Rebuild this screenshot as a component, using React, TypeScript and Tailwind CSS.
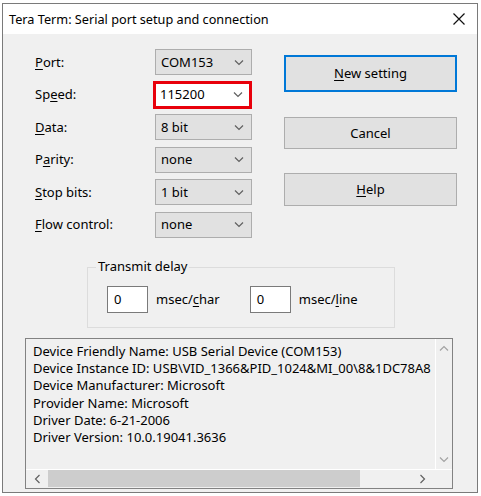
import React from "react";

const font = { fontFamily: '"Noto Sans", "Open Sans", sans-serif' };

function Chevron({ dir = "down", color = "#606060" }: { dir?: "down" | "up" | "left" | "right"; color?: string }) {
  const paths: Record<string, string> = {
    down: "M1 1.5 L5 5.5 L9 1.5",
    up: "M1 5.5 L5 1.5 L9 5.5",
    left: "M5.5 1 L1.5 5 L5.5 9",
    right: "M1.5 1 L5.5 5 L1.5 9",
  };
  const vertical = dir === "down" || dir === "up";
  return (
    <svg width={vertical ? 10 : 7} height={vertical ? 7 : 10} viewBox={vertical ? "0 0 10 7" : "0 0 7 10"} fill="none">
      <path d={paths[dir]} stroke={color} strokeWidth="1.2" />
    </svg>
  );
}

function U({ children }: { children: React.ReactNode }) {
  return <span className="underline underline-offset-2 decoration-1">{children}</span>;
}

function Combo({ value, highlight = false }: { value: string; highlight?: boolean }) {
  if (highlight) {
    return (
      <div className="w-[99px] h-[28px] -ml-[2px] border-[3px] border-[#e8000b] bg-white flex items-center justify-between pl-[4px] pr-[6px]">
        <span>{value}</span>
        <Chevron />
      </div>
    );
  }
  return (
    <div className="w-[97px] h-[26px] border border-[#adadad] bg-[#e1e1e1] flex items-center justify-between pl-[5px] pr-[7px]">
      <span>{value}</span>
      <Chevron />
    </div>
  );
}

function Row({ label, children }: { label: React.ReactNode; children: React.ReactNode }) {
  return (
    <div className="flex items-center h-[26px]">
      <div className="w-[120px]">{label}</div>
      {children}
    </div>
  );
}

function Button({ children, primary = false, h }: { children: React.ReactNode; primary?: boolean; h: string }) {
  return (
    <div
      className={`w-[173px] ${h} flex items-center justify-center bg-[#e1e1e1] ${
        primary ? "border-2 border-[#0078d7]" : "border border-[#adadad]"
      }`}
    >
      {children}
    </div>
  );
}

export default function App() {
  return (
    <div className="w-[481px] h-[496px] bg-white text-[13px] text-black leading-none" style={font}>
      <div className="ml-[2px] mt-[3px] w-[476px] h-[490px] border border-[#7a7a7a] bg-[#f0f0f0] flex flex-col">
        {/* Title bar */}
        <div className="h-[30px] bg-white flex items-center justify-between pl-[6px] pr-[12px] shrink-0">
          <span className="text-[12.7px]">Tera Term: Serial port setup and connection</span>
          <svg width="12" height="12" viewBox="0 0 12 12">
            <path d="M0.5 0.5 L11.5 11.5 M11.5 0.5 L0.5 11.5" stroke="#111" strokeWidth="1.2" />
          </svg>
        </div>

        {/* Top section */}
        <div className="flex pt-[15px] pl-[32px]">
          <div className="flex flex-col gap-[6.6px]">
            <Row label={<><U>P</U>ort:</>}>
              <Combo value="COM153" />
            </Row>
            <Row label={<>Sp<U>e</U>ed:</>}>
              <Combo value="115200" highlight />
            </Row>
            <Row label={<><U>D</U>ata:</>}>
              <Combo value="8 bit" />
            </Row>
            <Row label={<>P<U>a</U>rity:</>}>
              <Combo value="none" />
            </Row>
            <Row label={<><U>S</U>top bits:</>}>
              <Combo value="1 bit" />
            </Row>
            <Row label={<><U>F</U>low control:</>}>
              <Combo value="none" />
            </Row>
          </div>
          <div className="flex flex-col ml-[32px] pt-[6px]">
            <Button primary h="h-[37px]">
              <span><U>N</U>ew setting</span>
            </Button>
            <div className="mt-[25px]">
              <Button h="h-[32px]">Cancel</Button>
            </div>
            <div className="mt-[24px]">
              <Button h="h-[33px]">
                <span><U>H</U>elp</span>
              </Button>
            </div>
          </div>
        </div>

        {/* Transmit delay group */}
        <div className="ml-[84px] mt-[29px] w-[308px] h-[61px] border border-[#dcdcdc] relative">
          <span className="absolute -top-[8px] left-[8px] bg-[#f0f0f0] px-[2px]">Transmit delay</span>
          <div className="flex items-center pt-[18px] pl-[19px]">
            <div className="w-[41px] h-[27px] border border-[#7a7a7a] bg-white flex items-center pl-[6px]">0</div>
            <span className="ml-[8px]">msec/<U>c</U>har</span>
            <div className="ml-[30px] w-[41px] h-[27px] border border-[#7a7a7a] bg-white flex items-center pl-[6px]">0</div>
            <span className="ml-[8px]">msec/<U>l</U>ine</span>
          </div>
        </div>

        {/* Info box */}
        <div className="ml-[22px] mt-[10px] w-[428px] h-[151px] border border-[#828282] flex flex-col">
          <div className="flex flex-1 min-h-0">
            <div className="flex-1 bg-[#f0f0f0] pl-[7px] pt-[6px] flex flex-col gap-[4.2px] leading-[13px] overflow-hidden whitespace-nowrap">
              <div>Device Friendly Name: USB Serial Device (COM153)</div>
              <div>Device Instance ID: USB\VID_1366&amp;PID_1024&amp;MI_00\8&amp;1DC78A8</div>
              <div>Device Manufacturer: Microsoft</div>
              <div>Provider Name: Microsoft</div>
              <div>Driver Date: 6-21-2006</div>
              <div>Driver Version: 10.0.19041.3636</div>
            </div>
            <div className="w-[17px] bg-[#f0f0f0] border-l border-white flex flex-col items-center justify-between py-[6px]">
              <Chevron dir="up" color="#a3a3a3" />
              <Chevron dir="down" color="#a3a3a3" />
            </div>
          </div>
          <div className="h-[19px] flex items-center border-t border-white bg-[#f0f0f0]">
            <div className="w-[22px] flex justify-center">
              <Chevron dir="left" color="#606060" />
            </div>
            <div className="w-[312px] h-[17px] bg-[#cdcdcd]" />
            <div className="flex-1 flex justify-end pr-[26px]">
              <Chevron dir="right" color="#606060" />
            </div>
          </div>
        </div>
      </div>
    </div>
  );
}
